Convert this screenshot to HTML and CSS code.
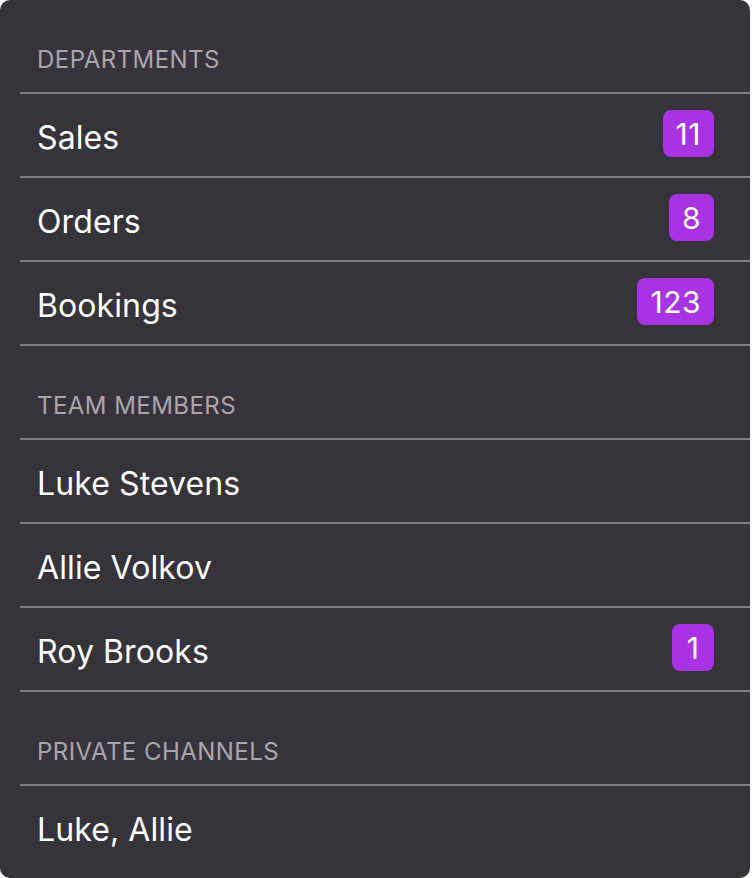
FILE: index.html
```html
<!DOCTYPE html>
<html>
<head>
<meta charset="utf-8">
<link rel="stylesheet" href="styles.css">
</head>
<body>
<div class="panel">
  <div class="section">
    <div class="header">DEPARTMENTS</div>
    <div class="row"><span class="name">Sales</span><span class="badge">11</span></div>
    <div class="row"><span class="name">Orders</span><span class="badge">8</span></div>
    <div class="row"><span class="name">Bookings</span><span class="badge">123</span></div>
  </div>
  <div class="section">
    <div class="header">TEAM MEMBERS</div>
    <div class="row"><span class="name">Luke Stevens</span></div>
    <div class="row"><span class="name">Allie Volkov</span></div>
    <div class="row"><span class="name">Roy Brooks</span><span class="badge">1</span></div>
  </div>
  <div class="section">
    <div class="header">PRIVATE CHANNELS</div>
    <div class="row last"><span class="name">Luke, Allie</span></div>
  </div>
</div>
</body>
</html>
```

FILE: styles.css
```css
html, body {
  margin: 0;
  padding: 0;
  background: #ffffff;
}
.panel {
  width: 750px;
  height: 878px;
  background: #37333a;
  border-radius: 10px;
  overflow: hidden;
  font-family: Inter, "Noto Sans", sans-serif;
  padding-left: 20px;
  box-sizing: border-box;
}
.section {
  display: flex;
  flex-direction: column;
}
.header {
  height: 94px;
  box-sizing: border-box;
  border-bottom: 2px solid #807c83;
  display: flex;
  align-items: flex-end;
  padding-left: 17px;
  padding-bottom: 18px;
  font-size: 24px;
  color: #aaa6ad;
  letter-spacing: 0.45px;
}
.row {
  height: 84px;
  box-sizing: border-box;
  border-bottom: 2px solid #807c83;
  display: flex;
  align-items: center;
  justify-content: space-between;
  padding-left: 17px;
  padding-right: 36px;
}
.row.last {
  border-bottom: none;
  height: 82px;
}
.name {
  font-size: 32px;
  color: #ffffff;
  letter-spacing: 0.1px;
  padding-top: 4px;
}
.badge {
  min-width: 42px;
  height: 47px;
  box-sizing: border-box;
  padding: 0 13px;
  margin-bottom: 3px;
  border-radius: 8px;
  background: #a833e2;
  color: #ffffff;
  font-size: 30px;
  letter-spacing: 0.5px;
  display: flex;
  align-items: center;
  justify-content: center;
}
```
